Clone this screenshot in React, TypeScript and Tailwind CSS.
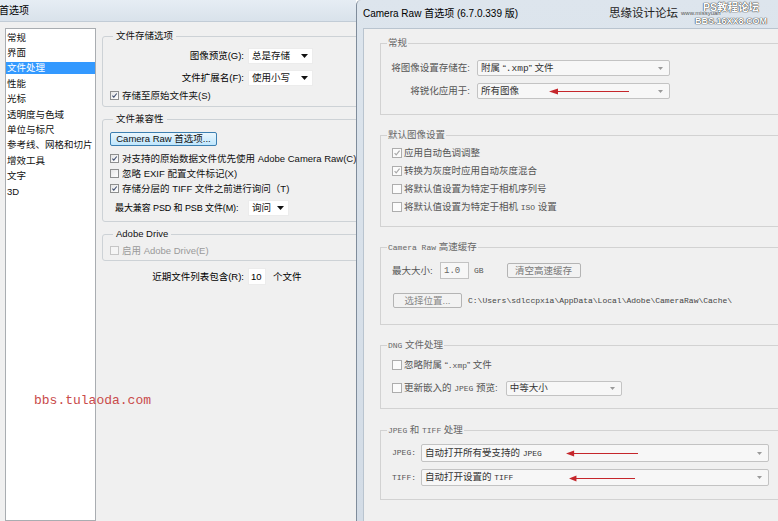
import type { ReactNode } from "react";

const ui = "font-['Liberation_Sans','Noto_Sans_CJK_SC',sans-serif]";
const mono = "font-['Liberation_Mono','Noto_Sans_CJK_SC',monospace]";

function Tick({ color }: { color: string }) {
  return (
    <svg viewBox="0 0 9 9" className="w-full h-full">
      <path d="M1.8 4.6 L3.6 6.6 L7.4 1.9" fill="none" stroke={color} strokeWidth="1.3" />
    </svg>
  );
}

function WinCheck({ checked, disabled, children }: { checked?: boolean; disabled?: boolean; children: ReactNode }) {
  return (
    <div className={`flex items-center h-[15px] whitespace-nowrap ${disabled ? "text-[#9a9a9a]" : "text-[#111]"}`}>
      <div
        className={`w-[9px] h-[9px] border ${
          disabled ? "border-[#c6c6c6] bg-[#f5f5f5]" : "border-[#8e8f8f] bg-gradient-to-br from-[#e6e6e6] to-white"
        }`}
      >
        {checked && <Tick color="#3b4a6b" />}
      </div>
      <span className="ml-[3px]">{children}</span>
    </div>
  );
}

function CrCheck({ checked, dim, children }: { checked?: boolean; dim?: boolean; children: ReactNode }) {
  return (
    <div className="flex items-center h-[18px] text-[#555] whitespace-nowrap">
      <div className="w-[10px] h-[10px] border border-[#adadad] bg-[#fbfbfb]">
        {checked && <Tick color={dim ? "#a8a8a8" : "#555"} />}
      </div>
      <span className="ml-[2px]">{children}</span>
    </div>
  );
}

function WinSelect({ value, w }: { value: string; w: string }) {
  return (
    <div className={`${w} h-[16px] bg-white border border-[#ececec] flex items-center pl-[3px] pr-[4px] text-[#111]`}>
      <span className="flex-1">{value}</span>
      <svg viewBox="0 0 7 4" className="w-[7px] h-[4px]">
        <path d="M0 0 H7 L3.5 4 Z" fill="#111" />
      </svg>
    </div>
  );
}

function CrSelect({ value, w, h, children }: { value: ReactNode; w: string; h: string; children?: ReactNode }) {
  return (
    <div
      className={`relative ${w} ${h} bg-[#f7f7f7] border border-[#c3c3c3] rounded-[2px] flex items-center pl-[3px] pr-[6px] text-[#333] whitespace-nowrap`}
    >
      <span className="flex-1">{value}</span>
      <svg viewBox="0 0 5 3" className="w-[5px] h-[3px]">
        <path d="M0 0 H5 L2.5 3 Z" fill="#9a9a9a" />
      </svg>
      {children}
    </div>
  );
}

function RedArrow({ className }: { className: string }) {
  return (
    <svg viewBox="0 0 80 8" preserveAspectRatio="none" className={`absolute ${className}`}>
      <path d="M6 4 H80" stroke="#c5262b" strokeWidth="1.4" />
      <path d="M0 4 L9 0.5 L9 7.5 Z" fill="#c5262b" />
    </svg>
  );
}

function WinGroup({ label, className, children }: { label: string; className: string; children: ReactNode }) {
  return (
    <fieldset className={`w-[320px] border border-[#cdd2d6] rounded-[3px] ${className}`}>
      <legend className="ml-[10px] px-[3px] h-[14px] leading-[14px] text-[#111]">{label}</legend>
      {children}
    </fieldset>
  );
}

function CrGroup({ label, className, children }: { label: ReactNode; className: string; children: ReactNode }) {
  return (
    <fieldset className={`w-[440px] border border-[#d2d2d2] ${className}`}>
      <legend className="ml-[6px] px-[1px] h-[14px] leading-[14px] text-[#666]">{label}</legend>
      {children}
    </fieldset>
  );
}

const navItems = ["常规", "界面", "文件处理", "性能", "光标", "透明度与色域", "单位与标尺", "参考线、网格和切片", "增效工具", "文字", "3D"];

function Preferences() {
  return (
    <div className="w-[356px] shrink-0 flex flex-col bg-[#f0f0f0] overflow-hidden">
      <div className="h-[22px] shrink-0 bg-gradient-to-b from-[#e6edf4] to-[#d9e2eb] border-b border-[#c2ccd6] flex items-center">
        <span className="-ml-[1px] text-[10px] text-black">首选项</span>
      </div>
      <div className="flex-1 flex pt-[6px]">
        <div className="ml-[5px] w-[91px] shrink-0 bg-white border border-[#a9adb1] pt-[1px]">
          {navItems.map((item) => (
            <div key={item} className="h-[15.4px] flex items-center">
              <div
                className={`w-full h-[12px] leading-[12px] pl-[1px] whitespace-nowrap ${
                  item === "文件处理" ? "bg-[#3399ff] text-white" : "text-[#111]"
                }`}
              >
                {item}
              </div>
            </div>
          ))}
        </div>

        <div className="ml-[6px] flex flex-col pt-[1px]">
          <WinGroup label="文件存储选项" className="pb-[3px]">
            <div className="flex items-center mt-[5px]">
              <span className="w-[141px] text-right">图像预览(G):</span>
              <div className="ml-[4px]">
                <WinSelect value="总是存储" w="w-[65px]" />
              </div>
            </div>
            <div className="flex items-center mt-[6px]">
              <span className="w-[141px] text-right">文件扩展名(F):</span>
              <div className="ml-[4px]">
                <WinSelect value="使用小写" w="w-[65px]" />
              </div>
            </div>
            <div className="pl-[7px] mt-[2px]">
              <WinCheck checked>存储至原始文件夹(S)</WinCheck>
            </div>
          </WinGroup>

          <WinGroup label="文件兼容性" className="mt-[5px] pb-[5px]">
            <div className="pl-[7px] mt-[6px]">
              <div className="w-[107px] h-[14px] border border-[#3c7fb1] rounded-[2px] bg-gradient-to-b from-[#eaf6fd] to-[#bee6fd] flex items-center justify-center text-[#111] whitespace-nowrap">
                Camera Raw 首选项...
              </div>
            </div>
            <div className="pl-[7px] mt-[5px]">
              <WinCheck checked>对支持的原始数据文件优先使用 Adobe Camera Raw(C)</WinCheck>
              <WinCheck>忽略 EXIF 配置文件标记(X)</WinCheck>
              <WinCheck checked>存储分层的 TIFF 文件之前进行询问（T)</WinCheck>
            </div>
            <div className="flex items-center mt-[4px] pl-[12px]">
              <span className="w-[129px] whitespace-nowrap text-[9px] tracking-[-0.1px]">最大兼容 PSD 和 PSB 文件(M):</span>
              <div className="ml-[4px]">
                <WinSelect value="询问" w="w-[41px]" />
              </div>
            </div>
          </WinGroup>

          <WinGroup label="Adobe Drive" className="mt-[5px] pb-[2px]">
            <div className="pl-[7px] mt-[2px]">
              <WinCheck disabled>启用 Adobe Drive(E)</WinCheck>
            </div>
          </WinGroup>

          <div className="flex items-center mt-[7px]">
            <span className="w-[142px] text-right">近期文件列表包含(R):</span>
            <div className="ml-[4px] w-[18px] h-[17px] bg-white border border-[#ececec] flex items-center pl-[2px]">10</div>
            <span className="ml-[7px]">个文件</span>
          </div>
        </div>
      </div>
    </div>
  );
}

function CameraRawPrefs() {
  return (
    <div className="flex-1 flex flex-col bg-gradient-to-b from-[#dde5ed] to-[#d3dce6] border-l border-[#7f8c9b] rounded-tl-[5px] pl-[6px] overflow-hidden">
      <div className="h-[28px] shrink-0 flex items-center relative">
        <span className="text-[10px] text-black whitespace-nowrap">Camera Raw 首选项 (6.7.0.339 版)</span>
        <span className="absolute left-[246px] top-[5px] text-[11.5px] leading-[16px] text-[#222] whitespace-nowrap">思缘设计论坛</span>
        <span className="absolute left-[318px] top-[9px] text-[6px] leading-[8px] text-[#555] whitespace-nowrap">www.missyuan</span>
        <span className="absolute left-[340px] top-[1px] text-[10.5px] leading-[13px] font-bold text-white whitespace-nowrap [text-shadow:0_0_1px_#222,0_0_1px_#222]">
          PS教程论坛
        </span>
        <span className="absolute left-[332px] top-[15px] text-[9px] leading-[12px] font-bold text-white whitespace-nowrap [text-shadow:0_0_1px_#222,0_0_1px_#222]">
          BBS.16XX8.COM
        </span>
      </div>

      <div className="flex-1 bg-[#f0f0f0] border-l border-t border-[#b9c4cf] pl-[16px] pt-[7px] flex flex-col">
        <CrGroup label="常规" className="pb-[15px]">
          <div className="flex items-center mt-[10px]">
            <span className="w-[89px] text-right text-[#555]">将图像设置存储在:</span>
            <div className="ml-[7px]">
              <CrSelect w="w-[193px]" h="h-[16px]" value={<>附属 “<span className={mono}>.xmp</span>” 文件</>} />
            </div>
          </div>
          <div className="flex items-center mt-[7px]">
            <span className="w-[89px] text-right text-[#555]">将锐化应用于:</span>
            <div className="ml-[7px]">
              <CrSelect w="w-[193px]" h="h-[16px]" value="所有图像">
                <RedArrow className="left-[71px] top-[4px] w-[80px] h-[7px]" />
              </CrSelect>
            </div>
          </div>
        </CrGroup>

        <CrGroup label="默认图像设置" className="mt-[13px] pb-[10px]">
          <div className="pl-[11px] mt-[2px]">
            <CrCheck checked dim>应用自动色调调整</CrCheck>
            <CrCheck checked dim>转换为灰度时应用自动灰度混合</CrCheck>
            <CrCheck>将默认值设置为特定于相机序列号</CrCheck>
            <CrCheck>
              将默认值设置为特定于相机 <span className={`${mono} text-[8px]`}>ISO</span> 设置
            </CrCheck>
          </div>
        </CrGroup>

        <CrGroup
          label={
            <>
              <span className={`${mono} text-[8px]`}>Camera Raw</span> 高速缓存
            </>
          }
          className="mt-[13px] pb-[16px]"
        >
          <div className="flex items-center pl-[11px] mt-[8px] text-[#555]">
            <span className="w-[48px]">最大大小:</span>
            <div className={`w-[29px] h-[17px] bg-[#f7f7f7] border border-[#c3c3c3] flex items-center pl-[3px] text-[#666] ${mono} text-[9px]`}>
              1.0
            </div>
            <span className={`ml-[5px] ${mono} text-[8px]`}>GB</span>
            <div className="ml-[23px] w-[74px] h-[15px] bg-[#f2f2f2] border border-[#b4b4b4] rounded-[2px] flex items-center justify-center text-[#777]">
              清空高速缓存
            </div>
          </div>
          <div className="flex items-center pl-[12px] mt-[14px]">
            <div className="w-[69px] h-[15px] bg-[#f2f2f2] border border-[#b4b4b4] rounded-[2px] flex items-center justify-center text-[#888]">
              选择位置...
            </div>
            <span className={`ml-[6px] ${mono} text-[8px] text-[#444] whitespace-nowrap`}>
              C:\Users\sdlccpxia\AppData\Local\Adobe\CameraRaw\Cache\
            </span>
          </div>
        </CrGroup>

        <CrGroup
          label={
            <>
              <span className={`${mono} text-[8px]`}>DNG</span> 文件处理
            </>
          }
          className="mt-[13px] pb-[11px]"
        >
          <div className="pl-[11px] mt-[4px]">
            <CrCheck>
              忽略附属 “<span className={`${mono} text-[8px]`}>.xmp</span>” 文件
            </CrCheck>
            <div className="flex items-center mt-[5px]">
              <CrCheck>
                更新嵌入的 <span className={`${mono} text-[8px]`}>JPEG</span> 预览:
              </CrCheck>
              <div className="ml-[8px]">
                <CrSelect w="w-[116px]" h="h-[15px]" value="中等大小" />
              </div>
            </div>
          </div>
        </CrGroup>

        <CrGroup
          label={
            <>
              <span className={`${mono} text-[8px]`}>JPEG</span> 和 <span className={`${mono} text-[8px]`}>TIFF</span> 处理
            </>
          }
          className="mt-[14px] pb-[13px]"
        >
          <div className="flex items-center pl-[11px] mt-[7px]">
            <span className={`w-[29px] ${mono} text-[8px] text-[#555]`}>JPEG:</span>
            <CrSelect
              w="w-[348px]"
              h="h-[18px]"
              value={
                <>
                  自动打开所有受支持的 <span className={`${mono} text-[8px]`}>JPEG</span>
                </>
              }
            >
              <RedArrow className="left-[144px] top-[5px] w-[72px] h-[7px]" />
            </CrSelect>
          </div>
          <div className="flex items-center pl-[11px] mt-[7px]">
            <span className={`w-[29px] ${mono} text-[8px] text-[#555]`}>TIFF:</span>
            <CrSelect
              w="w-[348px]"
              h="h-[17px]"
              value={
                <>
                  自动打开设置的 <span className={`${mono} text-[8px]`}>TIFF</span>
                </>
              }
            >
              <RedArrow className="left-[147px] top-[5px] w-[66px] h-[7px]" />
            </CrSelect>
          </div>
        </CrGroup>
      </div>
    </div>
  );
}

export default function App() {
  return (
    <div className={`relative w-[778px] h-[521px] flex overflow-hidden text-[9.5px] leading-[14px] ${ui}`}>
      <Preferences />
      <CameraRawPrefs />
      <span className={`absolute left-[34px] top-[392px] ${mono} text-[13px] leading-[18px] text-[#c94a4a]`}>bbs.tulaoda.com</span>
    </div>
  );
}
